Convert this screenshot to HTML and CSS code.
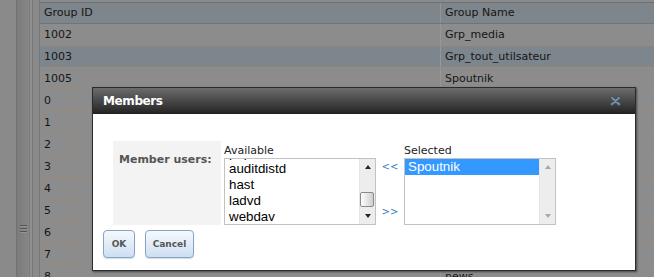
FILE: index.html
```html
<!DOCTYPE html>
<html lang="en">
<head>
	<meta charset="UTF-8">
	<title>Groups</title>
	<link rel="stylesheet" href="styles.css">
</head>
<body>
	<div class="page">
		<div class="sidebar">
			<div class="pane"></div>
			<div class="splitter"><span class="grip"></span></div>
			<div class="edge"></div>
		</div>
		<div class="grid">
			<div class="row head"><div class="cell id">Group ID</div><div class="cell name">Group Name</div></div>
			<div class="row"><div class="cell id">1002</div><div class="cell name">Grp_media</div></div>
			<div class="row current"><div class="cell id">1003</div><div class="cell name">Grp_tout_utilsateur</div></div>
			<div class="row"><div class="cell id">1005</div><div class="cell name">Spoutnik</div></div>
			<div class="row"><div class="cell id">0</div><div class="cell name">wheel</div></div>
			<div class="row"><div class="cell id">1</div><div class="cell name">daemon</div></div>
			<div class="row"><div class="cell id">2</div><div class="cell name">kmem</div></div>
			<div class="row"><div class="cell id">3</div><div class="cell name">sys</div></div>
			<div class="row"><div class="cell id">4</div><div class="cell name">tty</div></div>
			<div class="row"><div class="cell id">5</div><div class="cell name">operator</div></div>
			<div class="row"><div class="cell id">6</div><div class="cell name">mail</div></div>
			<div class="row"><div class="cell id">7</div><div class="cell name">bin</div></div>
			<div class="row"><div class="cell id">8</div><div class="cell name">news</div></div>
		</div>
	</div>

	<!-- members dialog -->
	<div class="dialog">
		<div class="dialog-title">
			<span>Members</span>
			<svg class="close" width="11" height="10" viewBox="0 0 11 10">
				<path d="M2 1.8 L9 8.2 M9 1.8 L2 8.2" stroke="#3f5263" stroke-width="3.8" stroke-linecap="round" fill="none"/>
				<path d="M2 1.8 L9 8.2 M9 1.8 L2 8.2" stroke="#7d92a6" stroke-width="1.8" stroke-linecap="round" fill="none"/>
			</svg>
		</div>
		<div class="dialog-body">
			<div class="field">
				<div class="label">Member users:</div>
				<div class="lists">
					<div class="picker">
						<div class="caption">Available</div>
						<div class="box">
							<div class="items">
								<ul class="scrolled">
									<li>pop</li>
									<li>auditdistd</li>
									<li>hast</li>
									<li>ladvd</li>
									<li>webdav</li>
								</ul>
							</div>
							<div class="scroll">
								<div class="btn"><i class="up"></i></div>
								<div class="track"><div class="thumb"></div></div>
								<div class="btn"><i class="down"></i></div>
							</div>
						</div>
					</div>
					<div class="moves">
						<a href="javascript:;">&lt;&lt;</a>
						<a href="javascript:;">&gt;&gt;</a>
					</div>
					<div class="picker">
						<div class="caption">Selected</div>
						<div class="box">
							<div class="items">
								<ul>
									<li class="on">Spoutnik</li>
								</ul>
							</div>
							<div class="scroll off">
								<div class="btn"><i class="up"></i></div>
								<div class="track"></div>
								<div class="btn"><i class="down"></i></div>
							</div>
						</div>
					</div>
				</div>
			</div>
			<div class="buttons">
				<button class="ok">OK</button>
				<button class="cancel">Cancel</button>
			</div>
		</div>
	</div>
</body>
</html>
```

FILE: styles.css
```css
/*reset*/
*{
	margin: 0;
	padding: 0;
	box-sizing: border-box;
}
ul{
	list-style: none;
}
html,body{
	width: 654px;
	height: 277px;
	overflow: hidden;
}
body{
	background-color: #8a8a8a;
	font-family: "DejaVu Sans", Verdana, sans-serif;
	font-size: 11px;
	color: #151515;
}
/*page*/
.page{
	display: flex;
	height: 277px;
}
.sidebar{
	display: flex;
	width: 39px;
	flex: none;
}
.pane{
	width: 16px;
}
.splitter{
	display: flex;
	justify-content: center;
	width: 14px;
	padding-top: 225px;
	border-left: 1px solid #727272;
	border-right: 1px solid #7a7a7a;
	background: linear-gradient(to right, #7b7b7b, #878787);
}
.grip{
	width: 7px;
	height: 8px;
	background: repeating-linear-gradient(to bottom, #565656 0 1px, #939393 1px 2px, transparent 2px 3px);
}
.edge{
	flex: 1;
	background: linear-gradient(to right, #909090 0 2px, #767676 2px 3px, #8a8a8a 3px);
}
/*grid*/
.grid{
	flex: 1;
	padding-top: 2px;
	border-left: 1px solid #777;
}
.row{
	display: flex;
	height: 22px;
	background-color: #8c8c8c;
	border-bottom: 1px solid #9a8b7c;
	line-height: 21px;
}
.row.head{
	height: 22px;
	background-color: #7e858b;
	border-top: 1px solid #6b7176;
	border-bottom: 1px solid #6d747a;
	line-height: 20px;
}
.row.current{
	background-color: #7d858d;
}
.cell{
	padding-left: 4px;
	white-space: nowrap;
}
.cell.id{
	width: 401px;
	border-right: 1px solid #979797;
}
.head .cell.id{
	border-right-color: #8f979d;
}
/*dialog*/
.dialog{
	position: absolute;
	left: 92px;
	top: 87px;
	width: 544px;
	height: 184px;
	border: 1px solid #2b2b2b;
	background-color: #fff;
	box-shadow: 1px 1px 2px rgba(0,0,0,.5);
}
.dialog-title{
	display: flex;
	justify-content: space-between;
	align-items: center;
	height: 26px;
	padding: 0 14px 0 10px;
	background: linear-gradient(to bottom, #6c6c6c, #2a2a2a 90%, #1e1e1e);
	color: #fff;
	font-weight: bold;
	font-size: 12px;
	letter-spacing: -0.4px;
}
.dialog-body{
	padding: 27px 0 0 10px;
}
.field{
	display: flex;
	margin-left: 10px;
}
.label{
	width: 108px;
	height: 84px;
	padding: 12px 6px 0;
	background-color: #f3f3f3;
	color: #555;
	font-weight: bold;
	line-height: 14px;
}
.lists{
	display: flex;
	align-items: flex-end;
	margin-left: 3px;
}
.caption{
	height: 16px;
	padding-top: 1px;
	line-height: 15px;
	color: #222;
}
.box{
	display: flex;
	width: 152px;
	height: 67px;
	border: 1px solid #c2c2c2;
}
.items{
	flex: 1;
	overflow: hidden;
	font-family: "Liberation Sans", Arial, sans-serif;
	font-size: 13.33px;
	line-height: 16px;
	color: #000;
}
.items .scrolled{
	margin-top: -14px;
}
.items li{
	padding-left: 4px;
}
.items li.on{
	padding-left: 3px;
	background-color: #3399ff;
	color: #fff;
}
/*scrollbar*/
.scroll{
	display: flex;
	flex-direction: column;
	width: 16px;
	background-color: #ededed;
	border-left: 1px solid #e4e4e4;
}
.scroll .btn{
	display: flex;
	justify-content: center;
	align-items: center;
	height: 16px;
}
.scroll .track{
	flex: 1;
	display: flex;
	flex-direction: column;
	justify-content: flex-end;
	padding: 1px 0;
}
.thumb{
	width: 14px;
	height: 15px;
	border: 1px solid #8b8b8b;
	border-radius: 2px;
	background: linear-gradient(to right, #fdfdfd, #cfcfcf);
}
.scroll i{
	width: 0;
	height: 0;
	border-left: 3px solid transparent;
	border-right: 3px solid transparent;
}
.scroll .up{
	border-bottom: 4px solid #222;
}
.scroll .down{
	border-top: 4px solid #222;
}
.scroll.off .up{
	border-bottom-color: #a8a8a8;
}
.scroll.off .down{
	border-top-color: #a8a8a8;
}
/*move arrows*/
.moves{
	display: flex;
	flex-direction: column;
	justify-content: space-between;
	align-items: center;
	width: 28px;
	height: 67px;
	padding: 3px 0 7px;
}
.moves a{
	color: #3b7ec2;
	font-size: 10px;
	line-height: 12px;
	text-decoration: none;
}
/*buttons*/
.buttons{
	display: flex;
	gap: 10px;
	margin-top: 5px;
}
.buttons button{
	height: 28px;
	border: 1px solid #86a5c6;
	border-radius: 4px;
	background: linear-gradient(to bottom, #f6f9fd, #cddff2);
	box-shadow: 0 1px 1px rgba(0,0,0,.15);
	color: #555;
	font-family: "DejaVu Sans", Verdana, sans-serif;
	font-size: 9px;
	font-weight: bold;
}
.ok{
	width: 32px;
}
.cancel{
	width: 49px;
}
```
